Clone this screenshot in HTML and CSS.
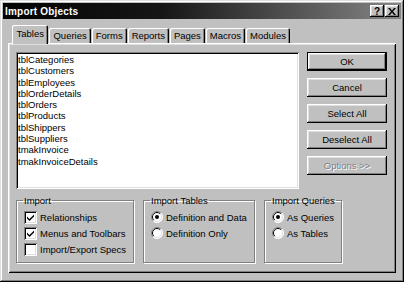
FILE: index.html
```html
<!DOCTYPE html>
<html lang="en">
<head>
  <meta charset="UTF-8">
  <title>Import Objects</title>
  <link rel="stylesheet" href="styles.css">
</head>
<body>
  <div class="window">
    <div class="titlebar">
      <span class="title">Import Objects</span>
      <div class="caption-btns">
        <span class="cbtn help">?</span>
        <span class="cbtn close">
          <svg width="8" height="7" viewBox="0 0 8 7"><path d="M0 0h2l2 2.5 2-2.5h2L5 3.5 8 7H6L4 4.5 2 7H0l3-3.5z" fill="#000"/></svg>
        </span>
      </div>
    </div>

    <div class="dialog">
      <div class="tabs">
        <div class="tab active">Tables</div>
        <div class="tab">Queries</div>
        <div class="tab">Forms</div>
        <div class="tab">Reports</div>
        <div class="tab">Pages</div>
        <div class="tab">Macros</div>
        <div class="tab">Modules</div>
      </div>

      <div class="panel">
        <div class="top-row">
          <div class="listbox">
            <div class="item">tblCategories</div>
            <div class="item">tblCustomers</div>
            <div class="item">tblEmployees</div>
            <div class="item">tblOrderDetails</div>
            <div class="item">tblOrders</div>
            <div class="item">tblProducts</div>
            <div class="item">tblShippers</div>
            <div class="item">tblSuppliers</div>
            <div class="item">tmakInvoice</div>
            <div class="item">tmakInvoiceDetails</div>
          </div>
          <div class="buttons">
            <div class="btn default">OK</div>
            <div class="btn">Cancel</div>
            <div class="btn">Select All</div>
            <div class="btn">Deselect All</div>
            <div class="btn disabled">Options &gt;&gt;</div>
          </div>
        </div>

        <div class="groups">
          <fieldset class="group g-import">
            <legend>Import</legend>
            <div class="opt">
              <span class="check on"><svg width="9" height="9" viewBox="0 0 9 9"><path d="M1 3.5l2.5 2.5L8 1.5v2L3.5 8 1 5.5z" fill="#000"/></svg></span>
              Relationships
            </div>
            <div class="opt">
              <span class="check on"><svg width="9" height="9" viewBox="0 0 9 9"><path d="M1 3.5l2.5 2.5L8 1.5v2L3.5 8 1 5.5z" fill="#000"/></svg></span>
              Menus and Toolbars
            </div>
            <div class="opt">
              <span class="check"></span>
              Import/Export Specs
            </div>
          </fieldset>

          <fieldset class="group g-tables">
            <legend>Import Tables</legend>
            <div class="opt">
              <svg class="radio" width="12" height="12" viewBox="0 0 12 12"><circle cx="6" cy="6" r="5.5" fill="#fff"/><path d="M2.1 9.9A5.5 5.5 0 0 1 9.9 2.1" stroke="#808080" fill="none"/><path d="M9.9 2.1A5.5 5.5 0 0 1 2.1 9.9" stroke="#fff" fill="none"/><path d="M2.8 9.2A4.5 4.5 0 0 1 9.2 2.8" stroke="#000" fill="none"/><path d="M9.2 2.8A4.5 4.5 0 0 1 2.8 9.2" stroke="#dfdfdf" fill="none"/><circle cx="6" cy="6" r="2" fill="#000"/></svg>
              Definition and Data
            </div>
            <div class="opt">
              <svg class="radio" width="12" height="12" viewBox="0 0 12 12"><circle cx="6" cy="6" r="5.5" fill="#fff"/><path d="M2.1 9.9A5.5 5.5 0 0 1 9.9 2.1" stroke="#808080" fill="none"/><path d="M9.9 2.1A5.5 5.5 0 0 1 2.1 9.9" stroke="#fff" fill="none"/><path d="M2.8 9.2A4.5 4.5 0 0 1 9.2 2.8" stroke="#000" fill="none"/><path d="M9.2 2.8A4.5 4.5 0 0 1 2.8 9.2" stroke="#dfdfdf" fill="none"/></svg>
              Definition Only
            </div>
          </fieldset>

          <fieldset class="group g-queries">
            <legend>Import Queries</legend>
            <div class="opt">
              <svg class="radio" width="12" height="12" viewBox="0 0 12 12"><circle cx="6" cy="6" r="5.5" fill="#fff"/><path d="M2.1 9.9A5.5 5.5 0 0 1 9.9 2.1" stroke="#808080" fill="none"/><path d="M9.9 2.1A5.5 5.5 0 0 1 2.1 9.9" stroke="#fff" fill="none"/><path d="M2.8 9.2A4.5 4.5 0 0 1 9.2 2.8" stroke="#000" fill="none"/><path d="M9.2 2.8A4.5 4.5 0 0 1 2.8 9.2" stroke="#dfdfdf" fill="none"/><circle cx="6" cy="6" r="2" fill="#000"/></svg>
              As Queries
            </div>
            <div class="opt">
              <svg class="radio" width="12" height="12" viewBox="0 0 12 12"><circle cx="6" cy="6" r="5.5" fill="#fff"/><path d="M2.1 9.9A5.5 5.5 0 0 1 9.9 2.1" stroke="#808080" fill="none"/><path d="M9.9 2.1A5.5 5.5 0 0 1 2.1 9.9" stroke="#fff" fill="none"/><path d="M2.8 9.2A4.5 4.5 0 0 1 9.2 2.8" stroke="#000" fill="none"/><path d="M9.2 2.8A4.5 4.5 0 0 1 2.8 9.2" stroke="#dfdfdf" fill="none"/></svg>
              As Tables
            </div>
          </fieldset>
        </div>
      </div>
    </div>
  </div>
</body>
</html>
```

FILE: styles.css
```css
body {
  margin: 0;
  font-family: 'Liberation Sans', Arial, sans-serif;
  font-size: 9.5px;
  color: #000;
  background: #c0c0c0;
}

.window {
  width: 404px;
  height: 282px;
  box-sizing: border-box;
  padding: 3px;
  background: #c0c0c0;
  box-shadow: inset -1px -1px #000, inset 1px 1px #dfdfdf,
              inset -2px -2px #808080, inset 2px 2px #fff;
}

.titlebar {
  height: 16px;
  display: flex;
  align-items: center;
  justify-content: space-between;
  padding: 0 2px;
  background: linear-gradient(to right, #030303 0%, #161616 40%, #858585 100%);
}

.title {
  color: #fff;
  font-weight: bold;
  font-size: 10px;
  letter-spacing: 0.2px;
}

.caption-btns {
  display: flex;
  gap: 1px;
}

.cbtn {
  width: 14px;
  height: 12px;
  display: flex;
  align-items: center;
  justify-content: center;
  background: #c0c0c0;
  font-weight: bold;
  font-size: 10px;
  box-shadow: inset -1px -1px #000, inset 1px 1px #fff,
              inset -2px -2px #808080, inset 2px 2px #dfdfdf;
}

.dialog {
  padding: 6px 5px 0 5px;
}

.tabs {
  display: flex;
  align-items: flex-end;
  gap: 1px;
  height: 18px;
  padding-left: 4px;
  position: relative;
  z-index: 1;
}

.tab {
  height: 15px;
  line-height: 15px;
  padding: 0 4px;
  background: #c0c0c0;
  border-top-left-radius: 2px;
  border-top-right-radius: 2px;
  box-shadow: inset 1px 1px #fff, inset -1px 0 #000, inset -2px 0 #808080;
}

.tab.active {
  height: 19px;
  line-height: 18px;
  margin-bottom: -1px;
  padding: 0 4.5px;
}

.panel {
  height: 230px;
  box-sizing: border-box;
  padding: 9px 8px;
  box-shadow: inset 1px 1px #fff, inset -1px -1px #000,
              inset 2px 2px #dfdfdf, inset -2px -2px #808080;
}

.top-row {
  display: flex;
  gap: 8px;
}

.listbox {
  width: 283px;
  height: 137px;
  box-sizing: border-box;
  padding: 2px 2px;
  background: #fff;
  box-shadow: inset 1px 1px #808080, inset -1px -1px #fff,
              inset 2px 2px #000, inset -2px -2px #dfdfdf;
}

.item {
  height: 11.3px;
  line-height: 11.3px;
  white-space: nowrap;
}

.buttons {
  display: flex;
  flex-direction: column;
  gap: 7px;
}

.btn {
  width: 80px;
  height: 19px;
  line-height: 19px;
  text-align: center;
  box-sizing: border-box;
  background: #c0c0c0;
  box-shadow: inset -1px -1px #000, inset 1px 1px #fff,
              inset -2px -2px #808080, inset 2px 2px #dfdfdf;
}

.btn.default {
  box-shadow: inset 0 0 0 1px #000, inset -2px -2px #000, inset 2px 2px #fff,
              inset -3px -3px #808080, inset 3px 3px #dfdfdf;
}

.btn.disabled {
  color: #808080;
  text-shadow: 1px 1px #fff;
}

.groups {
  display: flex;
  gap: 9px;
  margin-top: 6px;
}

.group {
  margin: 0;
  padding: 3px 0 0 6px;
  height: 68px;
  min-width: 0;
  box-sizing: border-box;
  border: 1px solid #808080;
  box-shadow: inset 1px 1px #fff, 1px 1px #fff;
}

.group legend {
  padding: 0 1px;
  margin-left: 0;
  line-height: 11px;
  white-space: nowrap;
}

.g-import { width: 118px; }
.g-tables { width: 112px; }
.g-queries { width: 78px; }

.opt {
  display: flex;
  align-items: center;
  gap: 3px;
  height: 16px;
  margin-left: 1px;
  white-space: nowrap;
}

.check {
  width: 13px;
  height: 13px;
  box-sizing: border-box;
  display: flex;
  align-items: center;
  justify-content: center;
  background: #fff;
  box-shadow: inset 1px 1px #808080, inset -1px -1px #fff,
              inset 2px 2px #000, inset -2px -2px #dfdfdf;
}

.radio {
  flex: none;
}
```
